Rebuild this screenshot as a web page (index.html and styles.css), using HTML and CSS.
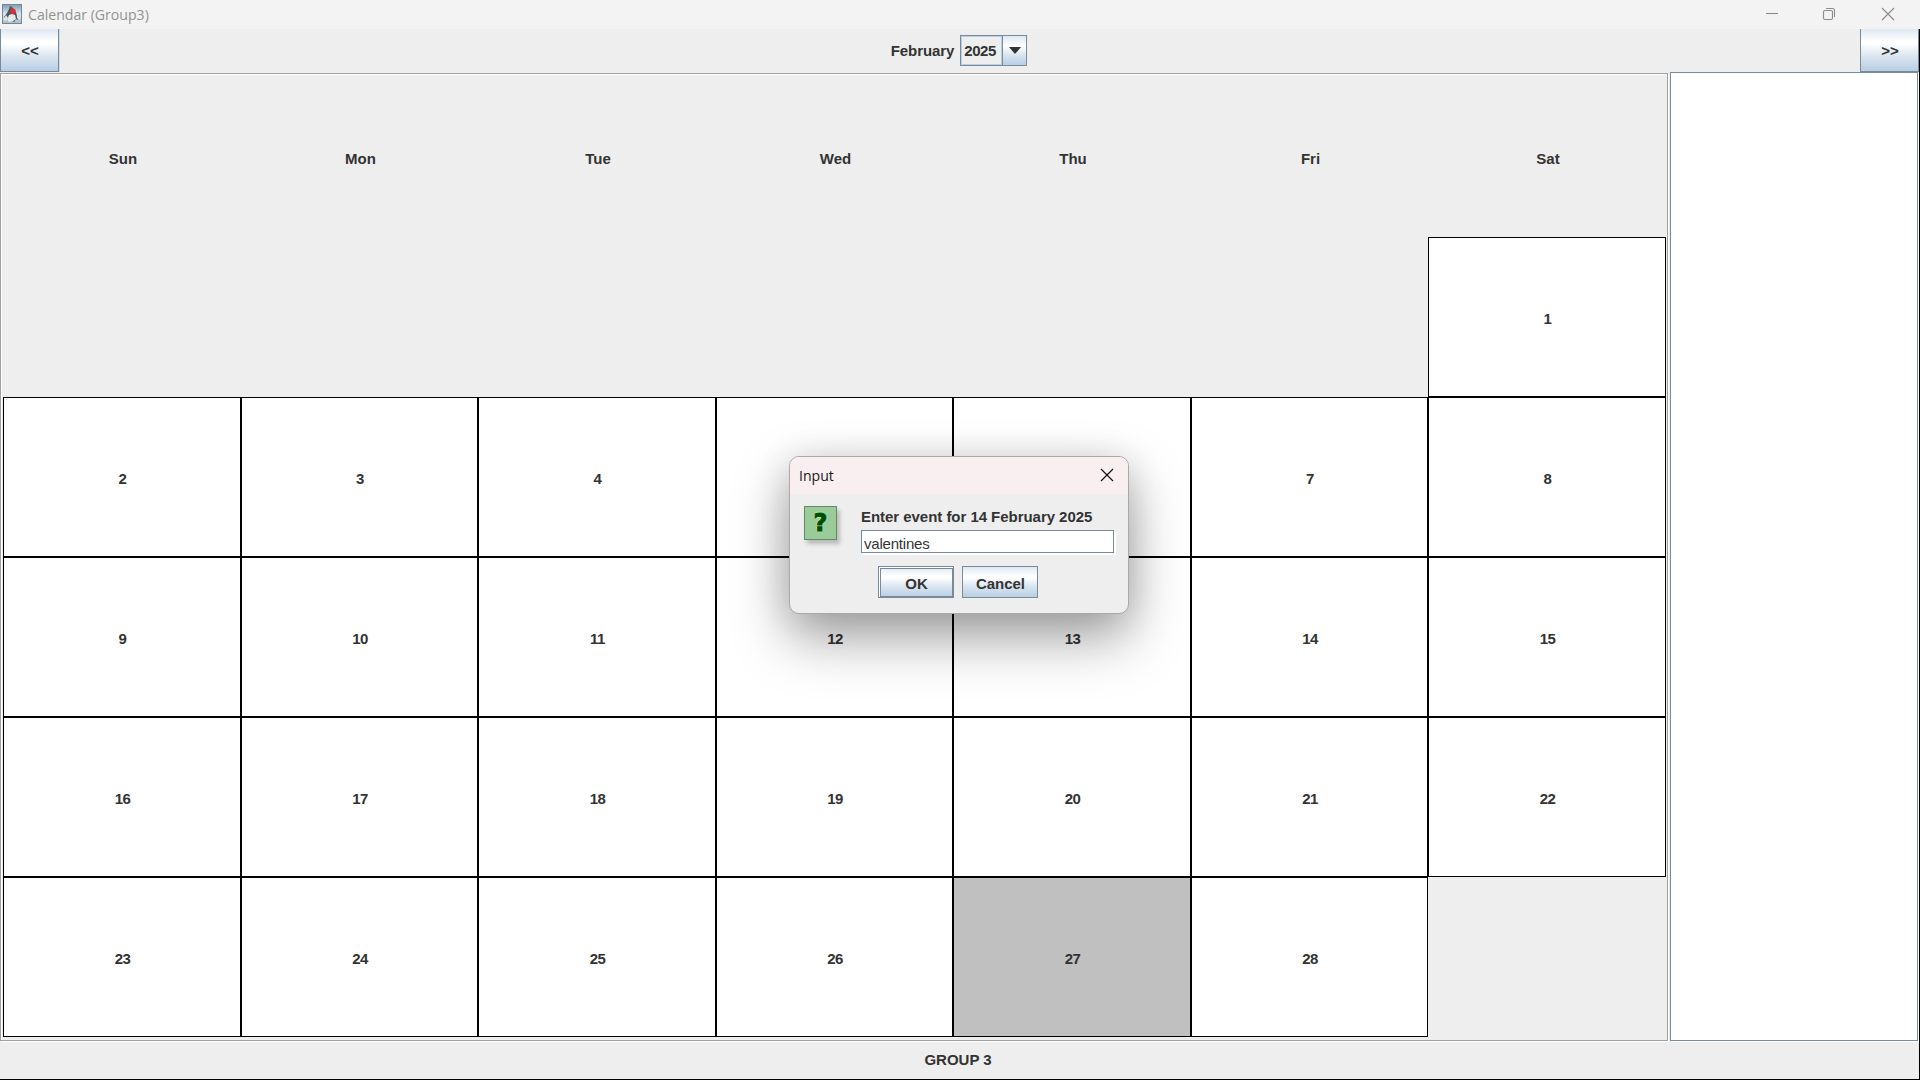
FILE: index.html
```html
<!DOCTYPE html>
<html lang="en">
<head>
<meta charset="utf-8">
<title>Calendar (Group3)</title>
<link rel="stylesheet" href="styles.css">
</head>
<body>
<div class="window">
  <header class="titlebar">
    <svg class="app-icon" width="20" height="20" viewBox="0 0 20 20">
      <defs><linearGradient id="sky" x1="0" y1="0" x2="0" y2="1"><stop offset="0" stop-color="#7f9bb3"/><stop offset=".5" stop-color="#dce6ee"/><stop offset="1" stop-color="#a4b9ca"/></linearGradient></defs>
      <rect x=".5" y=".5" width="19" height="19" fill="url(#sky)" stroke="#71899c"/>
      <path d="M8 2l2 1 4 5 1 4 3 2-2 2-2-1-2 3-3-2-3 1-2-1-2-3 3-4 2-4z" fill="#50575c"/>
      <path d="M7 11l3-1 3 1 1 4-3 2-4 1-2-2z" fill="#e6e9ea"/>
      <path d="M1 16l3-5 2 3-1 3zM15 11l4 3-2 2-2-2z" fill="#dfe4e7"/>
      <ellipse cx="11" cy="7.2" rx="2.7" ry="2.7" fill="#e32c32"/>
    </svg>
    <span class="title">Calendar (Group3)</span>
    <div class="controls">
      <svg width="14" height="14" viewBox="0 0 14 14"><path d="M1 6.5h12"/></svg>
      <svg width="14" height="14" viewBox="0 0 14 14"><rect x="1.5" y="3.5" width="9" height="9" rx="1.5"/><path d="M4 1.5h6.500q2 0 2 2V10"/></svg>
      <svg width="14" height="14" viewBox="0 0 14 14"><path d="M1 1l12 12M13 1L1 13"/></svg>
    </div>
  </header>
  <div class="app">
    <nav class="toolbar">
      <button class="btn nav-btn prev">&lt;&lt;</button>
      <div class="month">
        <span>February</span>
        <div class="combo"><span class="combo-value">2025</span><span class="combo-arrow"><svg width="12" height="7" viewBox="0 0 12 7"><path d="M0 0h12L6.500 6.500h-1z" fill="#333"/></svg></span></div>
      </div>
      <button class="btn nav-btn next">&gt;&gt;</button>
    </nav>
    <main class="content">
      <section class="calendar">
        <div class="name">Sun</div><div class="name">Mon</div><div class="name">Tue</div><div class="name">Wed</div><div class="name">Thu</div><div class="name">Fri</div><div class="name">Sat</div>
        <div class="day first">1</div>
        <div class="day">2</div><div class="day">3</div><div class="day">4</div><div class="day"></div><div class="day"></div><div class="day">7</div><div class="day">8</div>
        <div class="day">9</div><div class="day">10</div><div class="day">11</div><div class="day">12</div><div class="day">13</div><div class="day">14</div><div class="day">15</div>
        <div class="day">16</div><div class="day">17</div><div class="day">18</div><div class="day">19</div><div class="day">20</div><div class="day">21</div><div class="day">22</div>
        <div class="day">23</div><div class="day">24</div><div class="day">25</div><div class="day">26</div><div class="day today">27</div><div class="day">28</div>
      </section>
      <aside class="events"></aside>
    </main>
    <footer class="footer">GROUP 3</footer>
  </div>
  <div class="dialog">
    <div class="dialog-title"><span>Input</span>
      <svg width="14" height="14" viewBox="0 0 14 14"><path d="M1 1l12 12M13 1L1 13"/></svg>
    </div>
    <div class="dialog-body">
      <div class="prompt">
        <div class="question">?</div>
        <div class="fields">
          <label class="prompt-label">Enter event for 14 February 2025</label>
          <div class="field">valentines</div>
        </div>
      </div>
      <div class="actions"><button class="btn ok">OK</button><button class="btn">Cancel</button></div>
    </div>
  </div>
</div>
</body>
</html>
```
FILE: styles.css
```css
* { box-sizing: border-box; }
body { margin: 0; background: #eee; color: #333; font: bold 15px/18px "Liberation Sans", Arial, sans-serif; }
.window { position: relative; display: flex; flex-direction: column; width: 1920px; height: 1080px; overflow: hidden; }

.titlebar { display: flex; align-items: center; height: 29px; padding: 0 0 1px 2px; background: #f3f3f3; color: #929292; }
.title { margin-left: 6px; padding-top: 2px; font: 14.1px/20px "Open Sans", "Noto Sans", sans-serif; }
.controls { display: flex; gap: 44px; margin-left: auto; padding-right: 25px; }
.controls svg { fill: none; stroke: #8c8c8c; stroke-width: 1.1; }
.controls svg:nth-child(2) { margin: 0 1px 0 -1px; }

.app { display: flex; flex: 1; flex-direction: column; border-right: 1px solid #000; border-bottom: 1px solid #000; }
.toolbar { display: flex; justify-content: space-between; height: 43px; }
.btn { display: flex; align-items: center; justify-content: center; width: 76px; height: 32px; padding: 3px 0 0 1px; border: 1px solid #7a8a99; border-radius: 0; background: linear-gradient(#dde8f3, #fff 30%, #fff 35%, #dae5f0 65%, #b8cfe5); color: #333; font: inherit; letter-spacing: -.05px; }
.nav-btn { width: 59px; height: 43px; padding-top: 1px; border-top: 0; }
.prev { box-shadow: 1px 0 #d0dae4; }
.month { display: flex; gap: 6px; align-items: flex-start; padding: 6px 1px 0 0; }
.month > span { padding-top: 7px; letter-spacing: -.1px; }
.combo { display: flex; width: 67px; height: 31px; border: 1px solid #7a8a99; }
.combo-value { width: 41px; padding: 5px 0 0 2px; border: 1px solid #b8cfe5; letter-spacing: -.4px; }
.combo-arrow { display: flex; flex: 1; align-items: center; justify-content: center; border-left: 1px solid #7a8a99; background: linear-gradient(#dde8f3, #fff 35%, #dae5f0 65%, #b8cfe5); }

.content { display: flex; gap: 1px; height: 970px; }
.calendar { display: grid; grid-template-columns: 238px 237px 238px 237px 238px 237px 238px; grid-template-rows: repeat(6, 160px); width: 1668px; height: 968px; margin-top: 1px; padding: 3px 0 0 2px; border: 1px solid #a0a0a0; box-shadow: inset 1px 1px #fff, 1px 1px #fff; }
.name, .day { display: flex; align-items: center; justify-content: center; padding: 4px 0 0 2px; }
.day { padding-left: 1px; border: 1px solid #000; background: #fff; letter-spacing: -.5px; }
.first { grid-column: 7; }
.today { background: #c0c0c0; }
.events { width: 248px; height: 969px; margin-left: 1px; border: 1px solid #7a8a99; background: #fff; box-shadow: 1px 1px #fff; }
.footer { padding: 9px 3px 0 0; text-align: center; }

.dialog { position: absolute; left: 789px; top: 456px; width: 340px; height: 158px; border: 1px solid #a9a9a9; border-radius: 10px; background: #eee; box-shadow: 0 24px 56px rgba(0, 0, 0, .36), 0 4px 36px rgba(0, 0, 0, .12); }
.dialog-title { display: flex; align-items: center; justify-content: space-between; height: 37px; padding: 0 14px 1px 9px; border-radius: 9px 9px 0 0; background: #f9eff0; color: #191919; font: 14.1px/20px "Open Sans", "Noto Sans", sans-serif; }
.dialog-title span { padding-top: 2px; }
.dialog-title svg { fill: none; stroke: #111; stroke-width: 1.2; }
.dialog-body { padding: 12px 12px 0 14px; }
.prompt { display: flex; gap: 24px; }
.question { width: 33px; height: 34px; border: 1px solid #668866; background: #99cc99; box-shadow: 3px 4px 4px #bbb; color: #005000; font: bold 24px/33px "DejaVu Sans", sans-serif; text-align: center; text-shadow: 0 0 2px #d4ffd4, 0 0 2px #d4ffd4, 0 0 1px #d4ffd4; -webkit-text-stroke: 1px #005000; }
.fields { width: 255px; }
.prompt-label { display: block; height: 24px; padding-top: 2px; letter-spacing: -.04px; white-space: nowrap; }
.field { width: 253px; height: 23px; padding: 4px 0 0 2px; border: 1px solid #7a8a99; background: #fff; box-shadow: 1px 1px #fff, 2px 2px #fff; font-weight: normal; line-height: 17px; letter-spacing: -.2px; }
.actions { display: flex; gap: 8px; padding: 13px 0 0 74px; }
.ok { box-shadow: inset 1px 1px #fff, inset 2px 2px #7a8a99, inset -1px -1px #7a8a99; }
```
